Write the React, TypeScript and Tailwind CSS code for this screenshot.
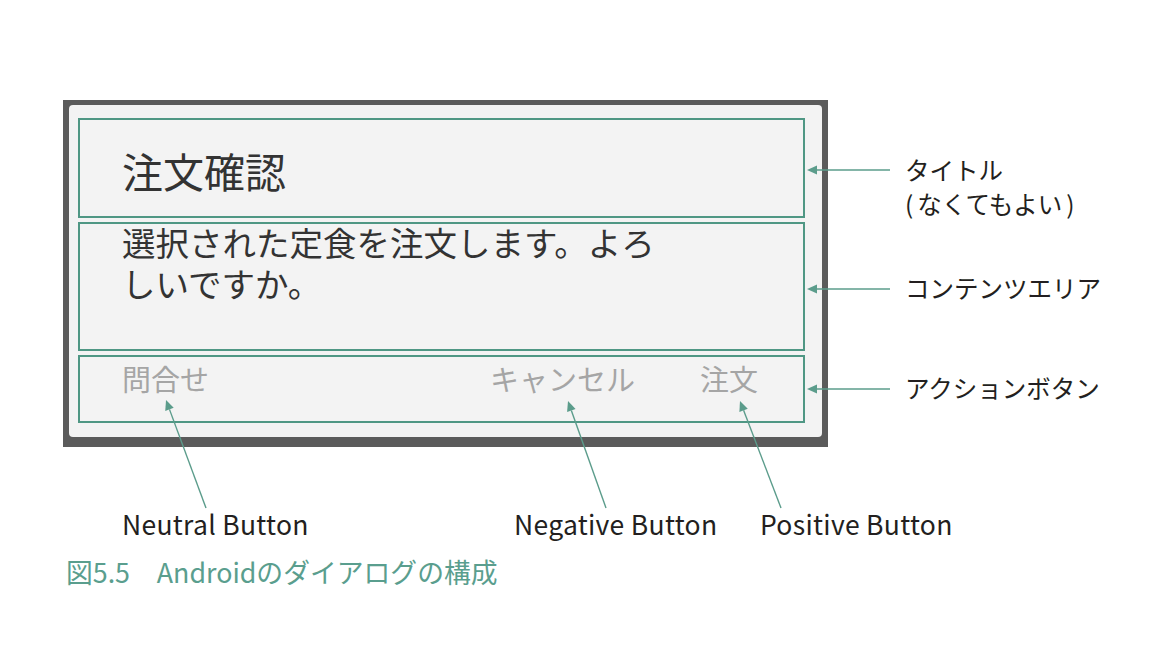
import React from 'react'

const TEAL = '#5b9c8b'

const Arrows: React.FC = () => {
  // callout arrows of the diagram: [tail x, tail y, tip x, tip y]
  const lines: [number, number, number, number][] = [
    [890, 170, 807, 170],
    [890, 289, 807, 289],
    [890, 389, 807, 389],
    [206, 508, 166, 400],
    [606, 508, 568, 401],
    [781, 508, 740, 401],
  ]
  return (
    <svg className="absolute inset-0 pointer-events-none" width={1160} height={662} viewBox="0 0 1160 662">
      {lines.map(([x1, y1, x2, y2], i) => {
        const a = Math.atan2(y2 - y1, x2 - x1)
        const len = 10
        const w = 4.5
        const bx = x2 - Math.cos(a) * len
        const by = y2 - Math.sin(a) * len
        const px = -Math.sin(a) * w
        const py = Math.cos(a) * w
        return (
          <g key={i}>
            <line x1={x1} y1={y1} x2={bx} y2={by} stroke={TEAL} strokeWidth={1.4} />
            <polygon points={`${x2},${y2} ${bx + px},${by + py} ${bx - px},${by - py}`} fill={TEAL} />
          </g>
        )
      })}
    </svg>
  )
}

const App: React.FC = () => {
  return (
    <div className="relative w-[1160px] h-[662px] bg-white overflow-hidden font-['Noto_Sans_CJK_JP',sans-serif]">
      <div className="flex pt-[100px] pl-[63px]">
        {/* Dialog screenshot */}
        <div className="w-[765px] h-[347px] bg-[#5b5b5b] pt-[5px] pl-[6px] pr-[6px] pb-[10px] shrink-0">
          <div className="h-full bg-[#f3f3f3] rounded-[4px] pt-[13px] pl-[9px] pr-[17px] flex flex-col">
            {/* Title */}
            <div className="h-[100px] border-2 border-[#4f9784] pl-[42px] pt-[25px]">
              <div className="text-[41px] leading-[50px] text-[#333333]">注文確認</div>
            </div>
            {/* Content */}
            <div className="mt-[4px] h-[129px] border-2 border-[#4f9784] pl-[42px]">
              <div className="text-[33.5px] leading-[41px] text-[#333333] -mt-[3px]">
                <div>選択された定食を注文します。よろ</div>
                <div>しいですか。</div>
              </div>
            </div>
            {/* Actions */}
            <div className="mt-[4px] h-[68px] border-2 border-[#4f9784] pl-[42px] pr-[45px] flex items-start pt-[1px]">
              <span className="text-[29px] leading-[40px] text-[#a5a5a5]">問合せ</span>
              <span className="ml-auto text-[29px] leading-[40px] text-[#a5a5a5]">キャンセル</span>
              <span className="ml-[65px] text-[29px] leading-[40px] text-[#a5a5a5]">注文</span>
            </div>
          </div>
        </div>

        {/* Part labels */}
        <div className="ml-[77px] flex flex-col text-[24.5px] leading-[34px] text-[#231f20]">
          <div className="mt-[53px]">タイトル</div>
          <div>
            <span className="mr-[4px]">(</span>なくてもよい<span className="ml-[4px]">)</span>
          </div>
          <div className="mt-[50px]">コンテンツエリア</div>
          <div className="mt-[66px]">アクションボタン</div>
        </div>
      </div>

      {/* Button labels */}
      <div className="flex mt-[60px] pl-[122px] text-[26.5px] leading-[34px] text-[#231f20] tracking-[0.3px]">
        <span className="w-[392px]">Neutral Button</span>
        <span className="w-[246px]">Negative Button</span>
        <span>Positive Button</span>
      </div>

      {/* Caption */}
      <div className="mt-[14px] pl-[66px] text-[26.8px] leading-[34px] text-[#5a9e8e]">
        図5.5　Androidのダイアログの構成
      </div>

      <Arrows />
    </div>
  )
}

export default App
